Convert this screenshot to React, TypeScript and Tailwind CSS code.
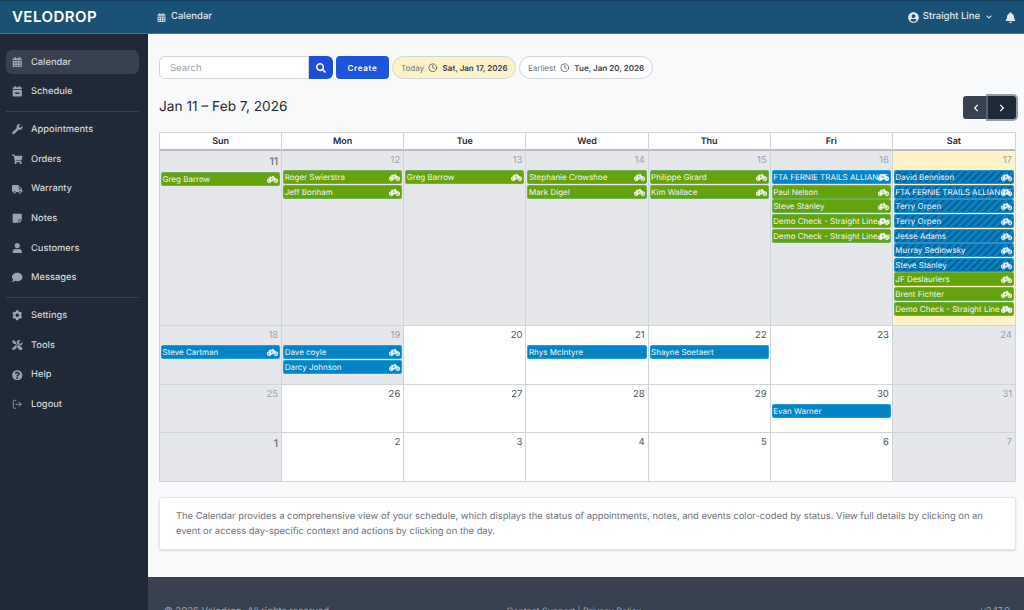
import React from "react";
import {
  FaCalendarAlt, FaCalendarMinus, FaWrench, FaShoppingCart, FaTruck, FaStickyNote, FaUser, FaComment,
  FaCog, FaTools, FaQuestionCircle, FaBicycle, FaUserCircle, FaBell, FaChevronDown, FaChevronLeft,
  FaChevronRight, FaSearch,
} from "react-icons/fa";
import { FiClock } from "react-icons/fi";
import { LuLogOut } from "react-icons/lu";

type Ev = { t: string; c: "g" | "b" | "s"; icon?: boolean };
type Day = { n: number; tone: "past" | "today" | "future"; big?: boolean; ev?: Ev[] };

const g = (t: string): Ev => ({ t, c: "g", icon: true });
const b = (t: string, icon = true): Ev => ({ t, c: "b", icon });
const s = (t: string): Ev => ({ t, c: "s", icon: true });

const rows: { h: string; days: Day[] }[] = [
  {
    h: "h-[175px]",
    days: [
      { n: 11, tone: "past", big: true, ev: [g("Greg Barrow")] },
      { n: 12, tone: "past", ev: [g("Roger Swierstra"), g("Jeff Bonham")] },
      { n: 13, tone: "past", ev: [g("Greg Barrow")] },
      { n: 14, tone: "past", ev: [g("Stephanie Crowshoe"), g("Mark Digel")] },
      { n: 15, tone: "past", ev: [g("Philippe Girard"), g("Kim Wallace")] },
      {
        n: 16, tone: "past",
        ev: [b("FTA FERNIE TRAILS ALLIANCE"), g("Paul Nelson"), g("Steve Stanley"), g("Demo Check - Straight Line Demo"), g("Demo Check - Straight Line Demo")],
      },
      {
        n: 17, tone: "today",
        ev: [s("David Bennison"), s("FTA FERNIE TRAILS ALLIANCE"), s("Terry Orpen"), s("Terry Orpen"), s("Jesse Adams"), s("Murray Sedlowsky"), s("Steve Stanley"), g("JF Deslauriers"), g("Brent Fichter"), g("Demo Check - Straight Line Demo")],
      },
    ],
  },
  {
    h: "h-[59px]",
    days: [
      { n: 18, tone: "past", ev: [b("Steve Cartman")] },
      { n: 19, tone: "past", ev: [b("Dave coyle"), b("Darcy Johnson")] },
      { n: 20, tone: "future" },
      { n: 21, tone: "future", ev: [b("Rhys McIntyre", false)] },
      { n: 22, tone: "future", ev: [b("Shayne Soetaert", false)] },
      { n: 23, tone: "future" },
      { n: 24, tone: "past" },
    ],
  },
  {
    h: "h-[48px]",
    days: [
      { n: 25, tone: "past" },
      { n: 26, tone: "future" },
      { n: 27, tone: "future" },
      { n: 28, tone: "future" },
      { n: 29, tone: "future" },
      { n: 30, tone: "future", ev: [b("Evan Warner", false)] },
      { n: 31, tone: "past" },
    ],
  },
  {
    h: "h-[48px]",
    days: [
      { n: 1, tone: "past", big: true },
      { n: 2, tone: "future" },
      { n: 3, tone: "future" },
      { n: 4, tone: "future" },
      { n: 5, tone: "future" },
      { n: 6, tone: "future" },
      { n: 7, tone: "past" },
    ],
  },
];

const nav1 = [
  { t: "Calendar", I: FaCalendarAlt, active: true },
  { t: "Schedule", I: FaCalendarMinus },
];
const nav2 = [
  { t: "Appointments", I: FaWrench },
  { t: "Orders", I: FaShoppingCart },
  { t: "Warranty", I: FaTruck },
  { t: "Notes", I: FaStickyNote },
  { t: "Customers", I: FaUser },
  { t: "Messages", I: FaComment },
];
const nav3 = [
  { t: "Settings", I: FaCog },
  { t: "Tools", I: FaTools },
  { t: "Help", I: FaQuestionCircle },
  { t: "Logout", I: LuLogOut },
];

function NavItem({ t, I, active }: { t: string; I: React.ComponentType<{ className?: string }>; active?: boolean }) {
  return (
    <div className={`flex h-[24px] items-center rounded-md pl-[6px] text-[9.3px] font-medium text-[#d1d5db] ${active ? "bg-[#374151]" : ""}`}>
      <span className="flex w-[19px] shrink-0 items-center">
        <I className="h-[10.5px] w-[10.5px] text-[#9ca3af]" />
      </span>
      <span className="pt-[1px]">{t}</span>
    </div>
  );
}

function Event({ e }: { e: Ev }) {
  const bg =
    e.c === "g"
      ? "bg-[#65a30d]"
      : e.c === "b"
        ? "bg-[#0284c7]"
        : "bg-[repeating-linear-gradient(135deg,#0284c7_0px,#0284c7_2.2px,#105f96_3px,#105f96_4.4px,#0284c7_5.2px)]";
  return (
    <div className={`relative mb-[0.65px] h-[14px] overflow-hidden rounded-[2px] border border-[#7dd3fc]/30 ${bg}`}>
      <span className="absolute top-0 left-[0.5px] whitespace-nowrap text-[8px] leading-[12px] text-[#f3f4f6]">{e.t}</span>
      {e.icon && <FaBicycle stroke="currentColor" strokeWidth={24} className="absolute top-[1px] right-[1px] h-[11px] w-[11px] text-white" />}
    </div>
  );
}

function Cell({ d, last }: { d: Day; last: boolean }) {
  const bg = d.tone === "past" ? "bg-[#e5e7eb]" : d.tone === "today" ? "bg-[#fef3c7]" : "bg-white";
  const num = d.big
    ? "text-[10.5px] font-medium text-[#6b7280] leading-[21px]"
    : d.tone === "future"
      ? "text-[9.5px] text-[#4b5563] leading-[19px]"
      : "text-[9.5px] text-[#9ca3af] leading-[19px]";
  return (
    <div className={`min-w-0 px-[1px] ${bg} ${last ? "" : "border-r border-[#d1d5db]"}`}>
      <div className={`pr-[2px] text-right ${num}`}>{d.n}</div>
      <div>
        {d.ev?.map((e, i) => <Event key={i} e={e} />)}
      </div>
    </div>
  );
}

function Pill({ label, date, today }: { label: string; date: string; today?: boolean }) {
  return (
    <div className={`flex h-[23px] items-center rounded-full border border-[#d1d5db] pl-[8px] pr-[7.5px] text-[8px] ${today ? "bg-[#fef3c7]" : "bg-white"}`}>
      <span className="text-[#6b7280]">{label}</span>
      <FiClock className="mx-[4px] h-[9.5px] w-[9.5px] text-[#4b5563]" />
      <span className="ml-[1px] font-semibold text-[#374151]">{date}</span>
    </div>
  );
}

export default function App() {
  return (
    <div className="flex h-[610px] flex-col overflow-hidden bg-[#f9fafb] font-['Inter',sans-serif] [text-rendering:geometricPrecision]">
      <header className="flex h-[34px] shrink-0 items-center border-t border-b border-t-[#15405c] border-b-[#4b7186] bg-[#1a5276] text-white">
        <div className="w-[157px] pt-[1px] pl-[12px] text-[15px] font-semibold tracking-[0.45px]">VELODROP</div>
        <FaCalendarAlt className="h-[9px] w-[9px] text-[#d1d5db]" />
        <span className="ml-[5px] pt-[1px] text-[9.5px] font-medium text-[#e5e7eb]">Calendar</span>
        <div className="ml-auto flex items-center pr-[8px]">
          <FaUserCircle className="h-[11px] w-[11px] text-[#e5e7eb]" />
          <span className="ml-[4px] pt-[1px] text-[9.5px] font-medium text-[#e5e7eb]">Straight Line</span>
          <FaChevronDown className="ml-[6px] h-[6px] w-[6px] text-[#e5e7eb]" />
          <FaBell className="ml-[13px] h-[11px] w-[11px] text-[#e5e7eb]" />
        </div>
      </header>
      <div className="flex min-h-0 flex-1">
        <aside className="w-[148px] shrink-0 bg-[#1f2937] pr-[9px] pl-[6px] pt-[16px]">
          <div className="flex flex-col gap-[5.6px]">
            {nav1.map((n) => <NavItem key={n.t} {...n} />)}
          </div>
          <div className="mt-[7px] mb-[6px] border-t border-[#374151]" />
          <div className="flex flex-col gap-[5.6px]">
            {nav2.map((n) => <NavItem key={n.t} {...n} />)}
          </div>
          <div className="mt-[7px] mb-[6px] border-t border-[#374151]" />
          <div className="flex flex-col gap-[5.6px]">
            {nav3.map((n) => <NavItem key={n.t} {...n} />)}
          </div>
        </aside>
        <div className="flex min-w-0 flex-1 flex-col">
          <main className="px-[11px] pr-[8px] pt-[22px]">
            <div className="flex items-center">
              <div className="flex h-[23px] w-[150px] items-center rounded-l-md border border-[#d1d5db] bg-white pt-[3px] pl-[10px] text-[9.5px] text-[#9ca3af]">Search</div>
              <div className="flex h-[23px] w-[24px] items-center justify-center rounded-r-md bg-[#1d4ed8]">
                <FaSearch className="h-[10px] w-[10px] text-white" />
              </div>
              <div className="ml-[3px] flex h-[23px] w-[53px] items-center justify-center rounded-[4px] bg-[#1d56db] text-[8px] font-semibold tracking-[0.7px] text-white">Create</div>
              <div className="ml-[3px]"><Pill label="Today" date="Sat, Jan 17, 2026" today /></div>
              <div className="ml-[3px]"><Pill label="Earliest" date="Tue, Jan 20, 2026" /></div>
            </div>
            <div className="mt-[16px] flex h-[25px] items-center justify-between">
              <h1 className="text-[13.7px] font-normal text-[#1f2937]">Jan 11 – Feb 7, 2026</h1>
              <div className="flex h-[23px]">
                <div className="flex w-[25px] items-center justify-center rounded-l-[3px] bg-[#374151]"><FaChevronLeft className="h-[8px] w-[8px] text-white" /></div>
                <div className="flex w-[28px] items-center justify-center rounded-r-[3px] bg-[#1f2937] ring-2 ring-[#6b7280]/70"><FaChevronRight className="h-[8px] w-[8px] text-white" /></div>
              </div>
            </div>
            <div className="mt-[12px] border border-[#d1d5db]">
              <div className="grid h-[18px] grid-cols-7 border-b-[2px] border-[#b9bcc6] bg-white">
                {["Sun", "Mon", "Tue", "Wed", "Thu", "Fri", "Sat"].map((d, i) => (
                  <div key={d} className={`text-center text-[9px] leading-[17px] font-semibold text-[#1f2937] ${i < 6 ? "border-r border-[#d1d5db]" : ""}`}>{d}</div>
                ))}
              </div>
              {rows.map((r, i) => (
                <div key={i} className={`grid grid-cols-7 ${r.h} ${i < 3 ? "border-b border-[#d1d5db]" : ""}`}>
                  {r.days.map((d, j) => <Cell key={j} d={d} last={j === 6} />)}
                </div>
              ))}
            </div>
            <div className="mt-[15px] h-[53px] rounded-[3px] border border-[#e5e7eb] bg-white px-[16px] pt-[11px] text-[9.4px] leading-[15px] text-[#6b7280] shadow-sm">
              The Calendar provides a comprehensive view of your schedule, which displays the status of appointments, notes, and events color-coded by status. View full details by clicking on an event or access day-specific context and actions by clicking on the day.
            </div>
          </main>
          <footer className="mt-[27px] flex h-[60px] shrink-0 items-start bg-[#374151] pr-[14px] pl-[16px] pt-[28px] text-[9.5px] text-[#9ca3af]">
            <span>© 2026 Velodrop. All rights reserved.</span>
            <span className="ml-[175px] text-[8.8px]">Contact Support | Privacy Policy</span>
            <span className="ml-auto">v2.17.0</span>
          </footer>
        </div>
      </div>
    </div>
  );
}
